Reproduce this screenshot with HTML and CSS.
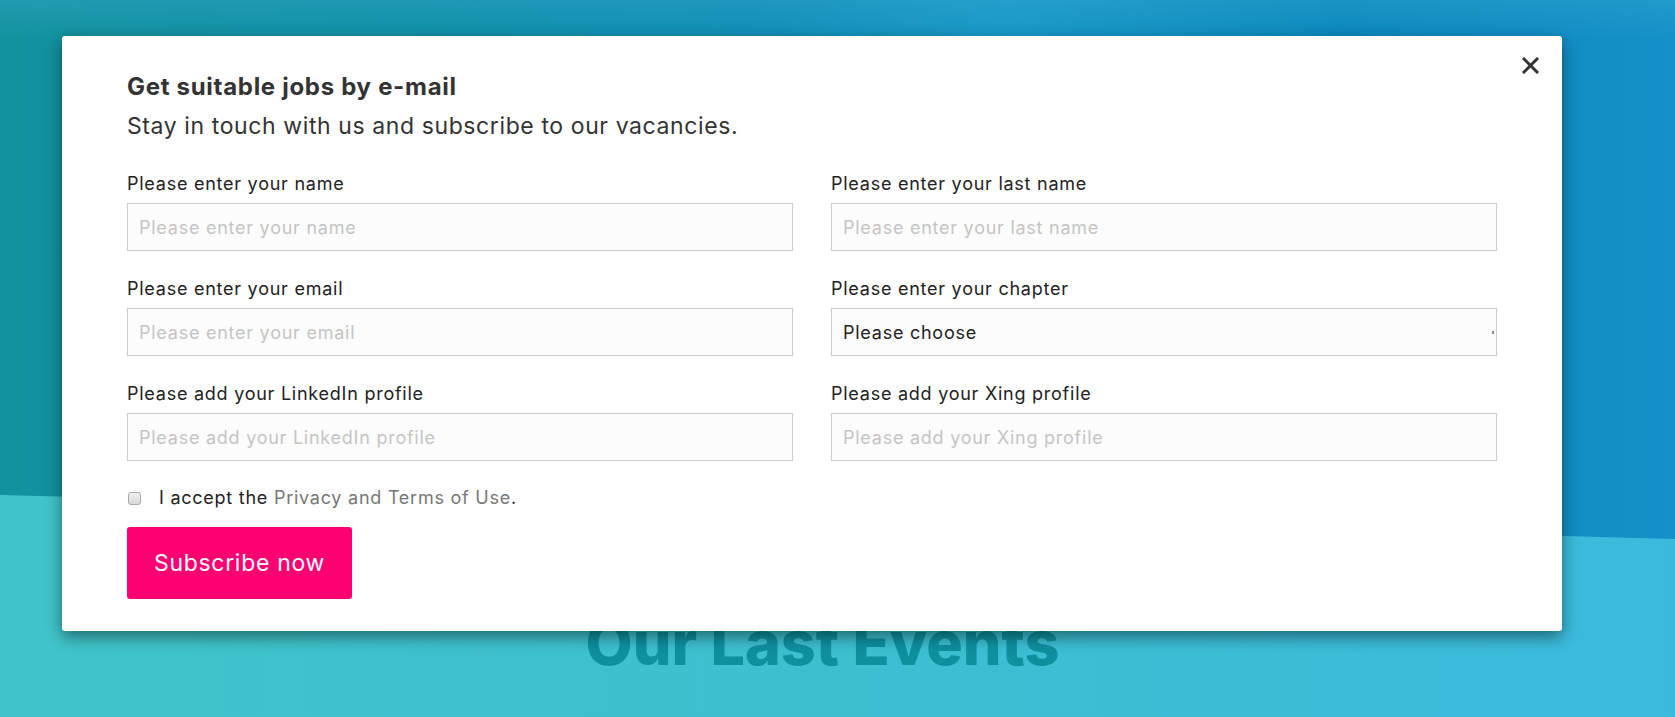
FILE: index.html
```html
<!DOCTYPE html>
<html lang="en">
<head>
    <meta charset="UTF-8">
    <meta name="viewport" content="width=device-width, initial-scale=1.0">
    <title>Jobs</title>
    <link rel="stylesheet" href="styles.css">
</head>
<body>

<div class="hero"></div>

<section class="events">
    <h2>Our Last Events</h2>
</section>

<div class="modal">
    <button class="close" aria-label="Close">
        <svg width="17" height="17" viewBox="0 0 17 17"><path d="M2 2 L15 15 M15 2 L2 15" stroke="#333" stroke-width="3" stroke-linecap="square"/></svg>
    </button>

    <h3 class="modal-title">Get suitable jobs by e-mail</h3>
    <p class="modal-sub">Stay in touch with us and subscribe to our vacancies.</p>

    <form class="sub-form">
        <div class="field">
            <label for="fname">Please enter your name</label>
            <input id="fname" type="text" placeholder="Please enter your name">
        </div>
        <div class="field">
            <label for="lname">Please enter your last name</label>
            <input id="lname" type="text" placeholder="Please enter your last name">
        </div>
        <div class="field">
            <label for="email">Please enter your email</label>
            <input id="email" type="email" placeholder="Please enter your email">
        </div>
        <div class="field">
            <label for="chapter">Please enter your chapter</label>
            <select id="chapter">
                <option>Please choose</option>
            </select>
        </div>
        <div class="field">
            <label for="linkedin">Please add your LinkedIn profile</label>
            <input id="linkedin" type="text" placeholder="Please add your LinkedIn profile">
        </div>
        <div class="field">
            <label for="xing">Please add your Xing profile</label>
            <input id="xing" type="text" placeholder="Please add your Xing profile">
        </div>
    </form>

    <div class="accept">
        <input type="checkbox" id="terms">
        <label for="terms">I accept the <a href="#">Privacy and Terms of Use</a>.</label>
    </div>

    <button class="btn-subscribe">Subscribe now</button>
</div>

</body>
</html>
```

FILE: styles.css
```css
body {
    margin: 0;
    padding: 0;
    width: 1675px;
    height: 717px;
    overflow: hidden;
    font-family: Inter, "Noto Sans", sans-serif;
    background: linear-gradient(90deg, #40c4c9 0%, #3dbfd0 50%, #3bbadd 100%);
    position: relative;
}

.hero {
    height: 540px;
    background:
        linear-gradient(180deg, rgba(60, 170, 210, 0.35) 0%, rgba(60, 170, 210, 0) 40px),
        linear-gradient(90deg, #12929d 0%, #0f8fa6 25%, #108db5 45%, #1898c6 60%, #0a87bc 80%, #1590c8 100%);
    clip-path: polygon(0 0, 100% 0, 100% 539px, 0 495px);
}

.events {
    text-align: center;
    padding-right: 30px;
}

.events h2 {
    margin: 68px 0 0;
    font-size: 61px;
    font-weight: 800;
    color: #0f909f;
    line-height: 70px;
}

.modal {
    position: absolute;
    top: 36px;
    left: 62px;
    width: 1500px;
    box-sizing: border-box;
    padding: 36px 65px 32px;
    background: #fff;
    border-radius: 3px;
    box-shadow: 0 6px 16px rgba(0, 0, 0, 0.45);
    color: #333;
}

.close {
    position: absolute;
    top: 21px;
    right: 23px;
    padding: 0;
    border: 0;
    background: none;
    line-height: 0;
    cursor: pointer;
}

.modal-title {
    margin: 0 0 9px;
    font-size: 24px;
    font-weight: 700;
    line-height: 30px;
    letter-spacing: 0.7px;
}

.modal-sub {
    margin: 0 0 31px;
    font-size: 23px;
    line-height: 30px;
    letter-spacing: 0.6px;
}

.sub-form {
    display: grid;
    grid-template-columns: 1fr 1fr;
    column-gap: 38px;
    row-gap: 26px;
}

.field label {
    display: block;
    font-size: 18px;
    line-height: 24px;
    letter-spacing: 0.75px;
    color: #222;
    margin-bottom: 7px;
}

.field input,
.field select {
    display: block;
    width: 100%;
    height: 48px;
    box-sizing: border-box;
    padding: 0 11px;
    border: 1px solid #ccc;
    background: #fcfcfc;
    font-family: inherit;
    font-size: 18px;
    letter-spacing: 0.75px;
    color: #222;
    outline: none;
    border-radius: 0;
}

.field input::placeholder {
    color: #c4c4c4;
}

.field select {
    -webkit-appearance: none;
    appearance: none;
    background: #fcfcfc linear-gradient(#888, #888) no-repeat right 2px center / 2px 3px;
}

.accept {
    display: flex;
    align-items: center;
    margin-top: 25px;
    font-size: 18px;
    line-height: 24px;
    letter-spacing: 0.75px;
    color: #222;
}

.accept input {
    -webkit-appearance: none;
    appearance: none;
    margin: 0 18px 0 1px;
    width: 13px;
    height: 13px;
    box-sizing: border-box;
    border: 1px solid #a9a9a9;
    border-radius: 3px;
    background: linear-gradient(#f0f0f0, #d8d8d8);
}

.accept a {
    color: #777;
    text-decoration: none;
}

.btn-subscribe {
    display: block;
    margin-top: 17px;
    width: 225px;
    height: 72px;
    border: 0;
    border-radius: 3px;
    background: #ff0073;
    color: #fff;
    font-family: inherit;
    font-size: 23px;
    letter-spacing: 0.7px;
    cursor: pointer;
}
```
